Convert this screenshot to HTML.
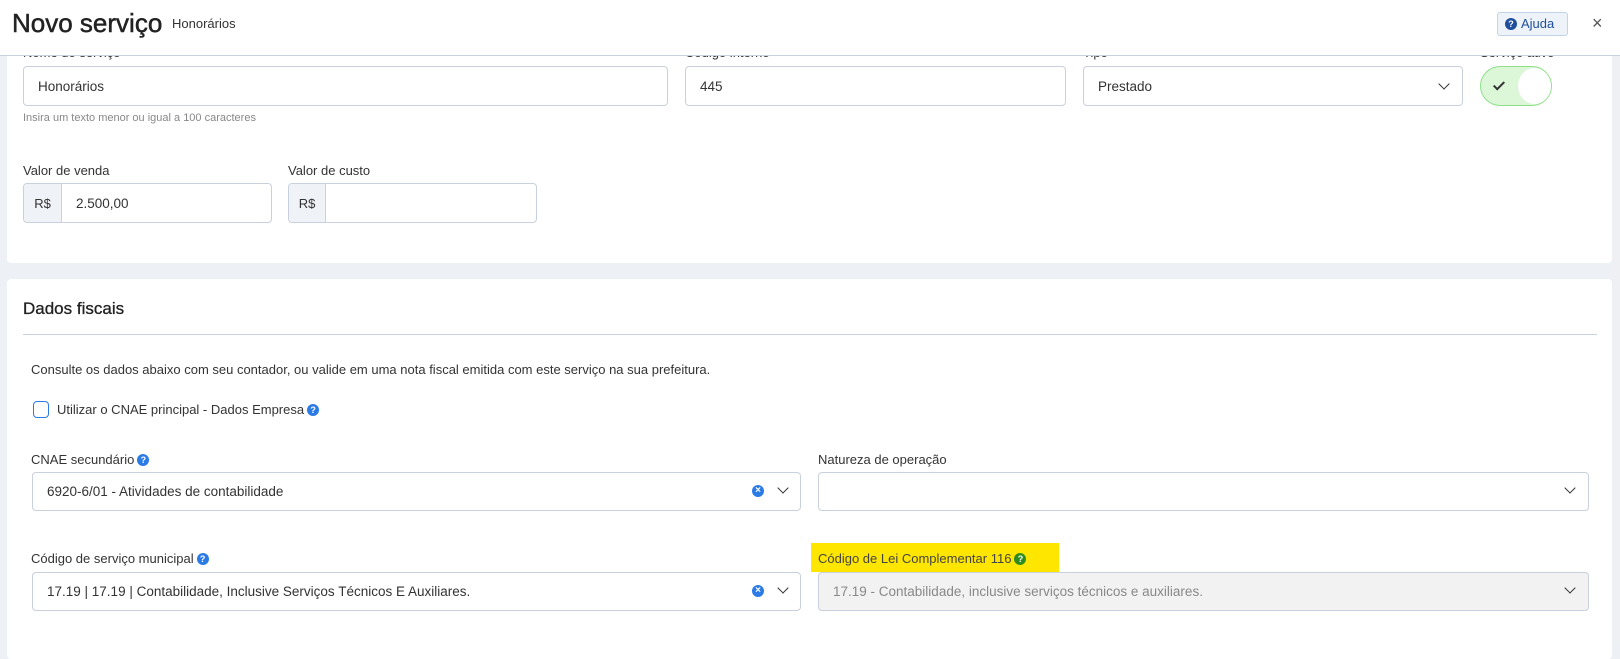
<!DOCTYPE html>
<html><head><meta charset="utf-8"><style>
*{box-sizing:border-box;margin:0;padding:0}
body{width:1620px;height:642px;overflow:hidden;background:#edf0f5;font-family:"Liberation Sans",sans-serif;color:#333;position:relative}
.a{position:absolute}
.panel{position:absolute;background:#fff;border-radius:4px}
.inp{position:absolute;border:1px solid #c9d1dc;border-radius:4px;background:#fff;font-size:13.5px;display:flex;align-items:center;padding-left:14px}
.lbl{position:absolute;font-size:13px;color:#333}
.chev{position:absolute;width:8px;height:8px;border-right:1.6px solid #333;border-bottom:1.6px solid #333;transform:rotate(45deg)}
.q{display:inline-block;width:12px;height:12px;border-radius:50%;background:#2c7be5;color:#fff;font-size:9px;font-weight:bold;text-align:center;line-height:12px;vertical-align:1px;margin-left:3px}
.x{position:absolute;width:12px;height:12px;border-radius:50%;background:#2c7be5;color:#fff;font-size:10px;font-weight:bold;text-align:center;line-height:12px}
</style></head><body>
<div class="a" style="left:0;top:0;width:1620px;height:56px;background:#fff;border-bottom:1px solid #c9d3df;z-index:2"></div>
<div class="a" style="left:12px;top:8px;font-size:26px;color:#222;z-index:3;-webkit-text-stroke:0.5px #222">Novo serviço</div>
<div class="a" style="left:172px;top:16px;font-size:13px;color:#333;z-index:3">Honorários</div>
<div class="a" style="left:1497px;top:12px;width:71px;height:24px;border:1px solid #c5d3e6;background:#eef3fa;border-radius:3px;font-size:13px;color:#1f4e9c;z-index:3;padding-left:7px;line-height:22px"><span class="q" style="background:#1f4e9c;margin:0 4px 0 0">?</span>Ajuda</div>
<div class="a" style="left:1592px;top:13px;font-size:18px;color:#555;z-index:3">×</div>
<div class="a" style="left:1612px;top:56px;width:8px;height:586px;background:#eef0f3"></div>

<div class="panel" style="left:7px;top:40px;width:1605px;height:223px"></div>
<div class="lbl" style="left:23px;top:45px">Nome do serviço</div>
<div class="lbl" style="left:685px;top:45px">Código interno</div>
<div class="lbl" style="left:1083px;top:45px">Tipo</div>
<div class="lbl" style="left:1480px;top:45px">Serviço ativo</div>
<div class="inp" style="left:23px;top:66px;width:645px;height:40px">Honorários</div>
<div class="a" style="left:23px;top:112px;font-size:11px;color:#888">Insira um texto menor ou igual a 100 caracteres</div>
<div class="inp" style="left:685px;top:66px;width:381px;height:40px">445</div>
<div class="inp" style="left:1083px;top:66px;width:380px;height:40px">Prestado</div>
<div class="chev" style="left:1440px;top:80px"></div>
<div class="a" style="left:1480px;top:66px;width:72px;height:40px;border-radius:20px;background:#dbf7d8;border:1px solid #8fdf8a"></div>
<div class="a" style="left:1518px;top:68px;width:33px;height:36px;border-radius:50%;background:#fff"></div>
<div class="a" style="left:1496px;top:79px;width:6px;height:11px;border-right:2px solid #333;border-bottom:2px solid #333;transform:rotate(45deg)"></div>

<div class="lbl" style="left:23px;top:163px">Valor de venda</div>
<div class="lbl" style="left:288px;top:163px">Valor de custo</div>
<div class="inp" style="left:23px;top:183px;width:249px;height:40px;padding-left:0"><div style="width:38px;height:38px;background:#eff2f7;border-right:1px solid #c9d1dc;font-size:13px;display:flex;align-items:center;justify-content:center;border-radius:4px 0 0 4px">R$</div><span style="margin-left:14px">2.500,00</span></div>
<div class="inp" style="left:288px;top:183px;width:249px;height:40px;padding-left:0"><div style="width:37px;height:38px;background:#eff2f7;border-right:1px solid #c9d1dc;font-size:13px;display:flex;align-items:center;justify-content:center;border-radius:4px 0 0 4px">R$</div></div>

<div class="panel" style="left:7px;top:279px;width:1605px;height:380px"></div>
<div class="a" style="left:23px;top:299px;font-size:17px;color:#222;-webkit-text-stroke:0.3px #222">Dados fiscais</div>
<div class="a" style="left:23px;top:334px;width:1574px;height:1px;background:#c9d1dc"></div>
<div class="a" style="left:31px;top:362px;font-size:13px">Consulte os dados abaixo com seu contador, ou valide em uma nota fiscal emitida com este serviço na sua prefeitura.</div>
<div class="a" style="left:33px;top:401px;width:16px;height:17px;border:1.5px solid #2c7be5;border-radius:4px"></div>
<div class="a" style="left:57px;top:402px;font-size:13px">Utilizar o CNAE principal - Dados Empresa<span class="q">?</span></div>

<div class="lbl" style="left:31px;top:452px">CNAE secundário<span class="q">?</span></div>
<div class="inp" style="left:32px;top:472px;width:769px;height:39px">6920-6/01 - Atividades de contabilidade</div>
<div class="x" style="left:752px;top:485px">×</div>
<div class="chev" style="left:779px;top:484px"></div>
<div class="lbl" style="left:818px;top:452px">Natureza de operação</div>
<div class="inp" style="left:818px;top:472px;width:771px;height:39px"></div>
<div class="chev" style="left:1566px;top:484px"></div>

<div class="lbl" style="left:31px;top:551px">Código de serviço municipal<span class="q">?</span></div>
<div class="inp" style="left:32px;top:572px;width:769px;height:39px">17.19 | 17.19 | Contabilidade, Inclusive Serviços Técnicos E Auxiliares.</div>
<div class="x" style="left:752px;top:585px">×</div>
<div class="chev" style="left:779px;top:584px"></div>
<div class="a" style="left:811px;top:543px;width:248px;height:29px;background:#ffe600"></div>
<div class="lbl" style="left:818px;top:551px;color:#444">Código de Lei Complementar 116<span class="q" style="background:#2e8b1e">?</span></div>
<div class="inp" style="left:818px;top:572px;width:771px;height:39px;background:#f2f2f2;color:#888">17.19 - Contabilidade, inclusive serviços técnicos e auxiliares.</div>
<div class="chev" style="left:1566px;top:584px"></div>
</body></html>
